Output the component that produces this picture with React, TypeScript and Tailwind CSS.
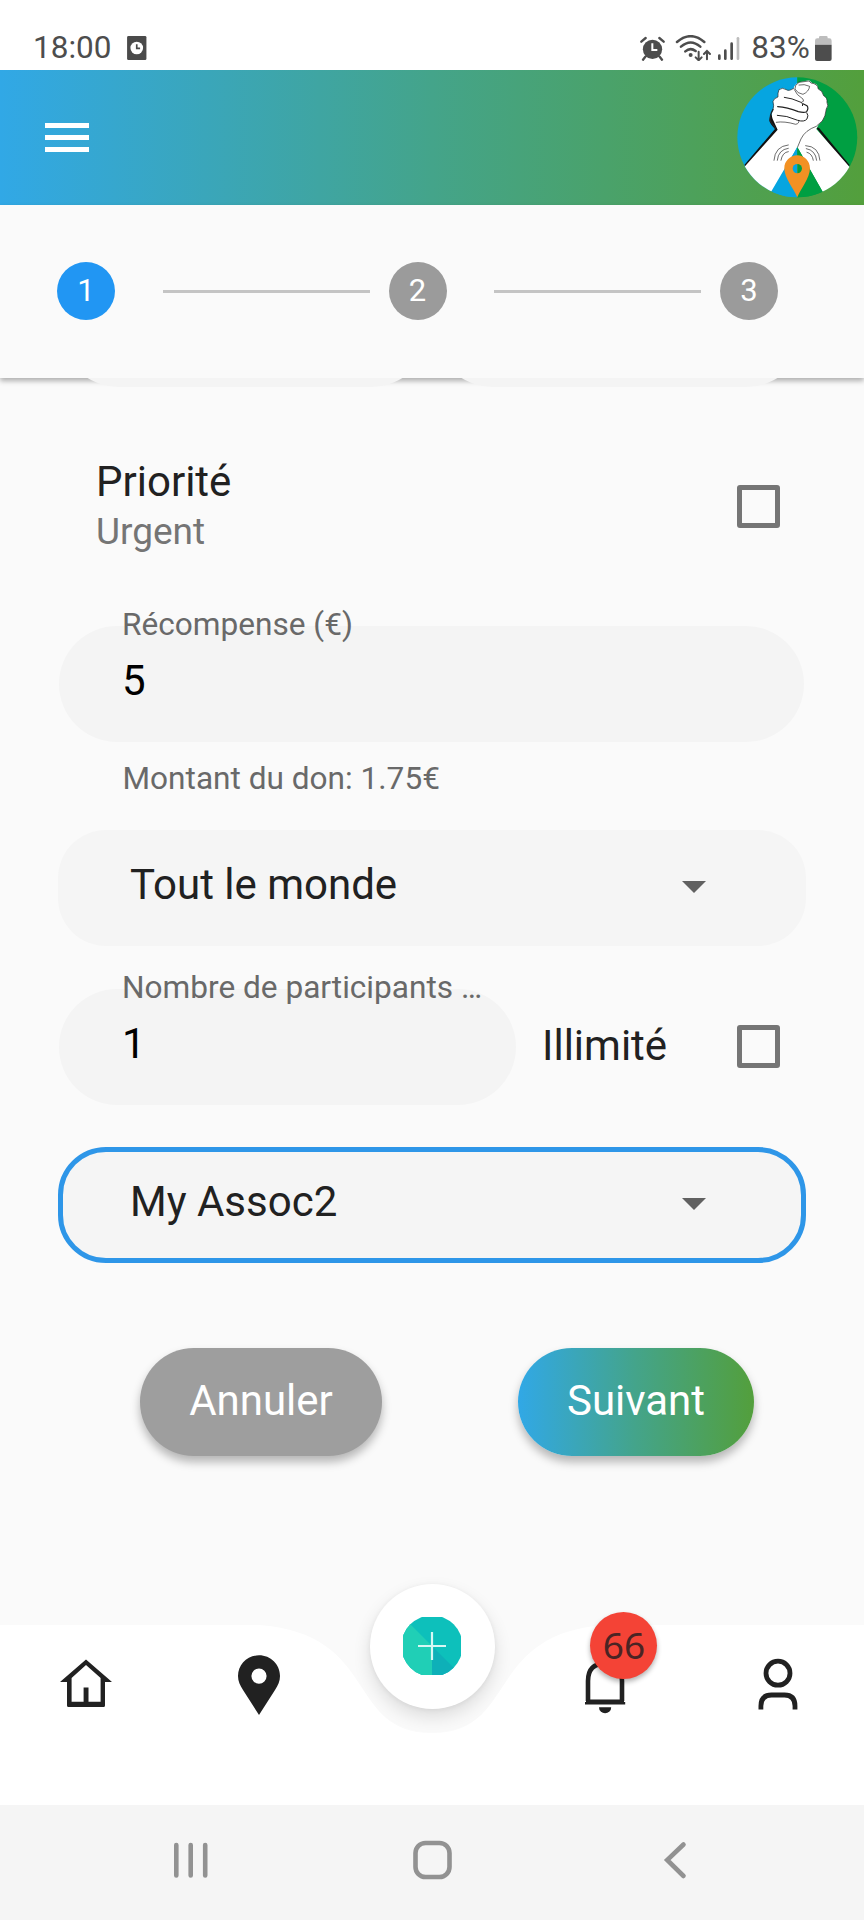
import React, { useState } from 'react';

const steps = [1, 2, 3];

const StatusBar = () => (
  <div className="flex h-[70px] items-center pt-[26px] pl-[33px] pr-[32px] bg-white text-[31.5px] leading-none text-[#4d4d4d]">
    <span>18:00</span>
    <svg viewBox="0 0 58 72" className="ml-[16px] h-[24px] w-[19.5px]">
      <rect width="58" height="72" rx="4" fill="#4a4a4a" />
      <circle cx="29" cy="36" r="19" fill="#fff" />
      <path d="M29 25v12h10" fill="none" stroke="#4a4a4a" strokeWidth="5" />
    </svg>
    <div className="ml-auto flex items-center">
      {/* alarm */}
      <svg viewBox="30 30 75 80" className="h-[26.7px] w-[25px]">
        <circle cx="67.5" cy="73" r="29" fill="#4d4d4d" />
        <path d="M34 50l13-11M101 50L88 39M46 95l-7 9M89 95l7 9" stroke="#4d4d4d" strokeWidth="7" strokeLinecap="round" />
        <path d="M67 55v20h15" fill="none" stroke="#fff" strokeWidth="6" />
      </svg>
      {/* wifi */}
      <svg viewBox="135 30 112 80" className="ml-[10px] h-[26.7px] w-[37.3px]" fill="none" stroke="#4d4d4d" strokeWidth="7.5" strokeLinecap="round">
        <path d="M141 51Q182 16 223 51M153 65Q182 40 211 65M166 79Q181 66 197 78" />
        <circle cx="182" cy="90" r="6" fill="#4d4d4d" stroke="none" />
        <path d="M206 80v25M197 97l9 9 9-9M231 103V79M222 87l9-9 9 9" strokeWidth="6" />
      </svg>
      {/* cell signal */}
      <svg viewBox="262 30 70 80" className="ml-[5px] h-[26.7px] w-[23.3px]" strokeWidth="8" strokeLinecap="round" stroke="#4d4d4d">
        <path d="M269 92v9M287 77v24M306 56v45" />
        <path d="M325 40v61" stroke="#bdbdbd" />
      </svg>
      <span className="ml-[11px]">83%</span>
      {/* battery */}
      <svg viewBox="552 30 55 80" className="ml-[4px] h-[26.7px] w-[18.3px]">
        <path d="M567 40v-3q0-4 4-4h18q4 0 4 4v3h5q7 0 7 7v12h-50V47q0-7 7-7z" fill="#bdbdbd" />
        <path d="M555 59h50v43q0 6-6 6h-38q-6 0-6-6z" fill="#4d4d4d" />
      </svg>
    </div>
  </div>
);

const Logo = () => (
  <svg viewBox="20 22 362 362" className="h-[120.6px] w-[120.6px]">
    <defs>
      <clipPath id="logo-disc">
        <circle cx="201" cy="203" r="180" />
      </clipPath>
    </defs>
    <g clipPath="url(#logo-disc)">
      <rect x="20" y="20" width="181" height="370" fill="#06a5e0" />
      <rect x="201" y="20" width="185" height="370" fill="#009f42" />
      {/* arm outlines */}
      <path d="M121 132L117 152Q118 162 134 178L42 286L50 296L150 180Z" fill="#111" />
      <path d="M258 174L266 174L358 286L352 294Z" fill="#111" />
      <path
        d="M201 232L285 380L400 340L356 290L258 178Q262 166 276 154Q286 140 288 118Q296 108 290 98Q292 84 280 78Q276 62 264 58Q264 42 246 40L236 32L206 38Q192 46 190 56Q176 66 168 60Q156 52 146 60Q142 70 143 82Q130 86 128 96Q132 108 128 120Q122 134 127 148L142 180L44 290L20 350L118 374Z"
        fill="#fff"
      />
      <path d="M201 232L115 390H201Z" fill="#06a5e0" />
      <path d="M201 232L290 390H201Z" fill="#009f42" />
      <g fill="none" stroke="#222" strokeWidth="2" strokeLinecap="round">
        <path d="M258 170Q224 182 212 208L202 232" />
        <path d="M190 56Q176 66 168 60Q156 52 146 60Q142 70 143 82Q130 86 128 96Q132 108 128 120" />
        <path d="M206 38Q192 46 194 58Q202 72 218 74Q236 66 238 50Q222 42 206 46M206 38L236 34L242 40Q262 42 264 58Q276 62 280 78Q292 84 290 98Q296 108 288 118Q286 140 276 154L260 168" />
        <path d="M192 60Q198 76 218 88Q224 96 214 98" />
        <path d="M162 83Q184 85 212 98Q220 102 217 108" strokeWidth="3" />
        <path d="M142 111Q170 113 204 126Q222 130 229 126Q236 116 230 108L218 102" strokeWidth="3.5" />
        <path d="M141 137Q168 137 202 152Q222 158 230 148Q236 138 230 130" strokeWidth="3" />
        <path d="M138 158Q162 154 196 164Q208 162 205 152" />
        <path d="M128 120Q118 136 120 154L136 176" strokeWidth="4" />
        <path d="M131 272Q134 230 174 226M141 272Q144 240 174 236M152 272Q156 248 174 246" />
        <path d="M226 228Q266 230 269 272M228 237Q256 242 259 272M230 248Q246 252 249 272" />
      </g>
      <path d="M201 257c-21 0-39 17-39 39 0 30 29 62 39 87 10-25 38-57 38-87 0-22-17-39-38-39z" fill="#f29123" />
      <path d="M201 283a14 14 0 0 0 0 28z" fill="#06a5e0" />
      <path d="M201 283a14 14 0 0 1 0 28z" fill="#009f42" />
    </g>
  </svg>
);

const AppBar = () => (
  <header className="flex h-[134.5px] items-center justify-between bg-linear-to-r/srgb from-[#31a8e6] via-[#44a48a] to-[#539f3c] pl-[45.3px] pr-[6.5px]">
    <button className="flex flex-col gap-[7px]" aria-label="Menu">
      <span className="h-[5px] w-[43.7px] bg-white" />
      <span className="h-[5px] w-[43.7px] bg-white" />
      <span className="h-[5px] w-[43.7px] bg-white" />
    </button>
    <Logo />
  </header>
);

const Stepper = ({ current }: { current: number }) => (
  <div className="flex h-[173px] items-center bg-[#fafafa] pl-[57px] pr-[86px] shadow-[0_3px_5px_0px_rgba(0,0,0,0.3)]">
    {steps.map(step => (
      <React.Fragment key={step}>
        {step > 1 && <div className="mr-[19px] ml-[47.5px] h-[3px] flex-1 bg-[#c4c4c4]" />}
        <div
          className={`flex h-[58px] w-[58px] items-center justify-center rounded-full pt-[1px] text-[31px] text-white ${
            step === current ? 'bg-[#2196f3]' : 'bg-[#9b9b9b]'
          }`}
        >
          {step}
        </div>
      </React.Fragment>
    ))}
  </div>
);

const Checkbox = ({ checked, onChange, label }: { checked: boolean; onChange: () => void; label: string }) => (
  <button
    role="checkbox"
    aria-checked={checked}
    aria-label={label}
    onClick={onChange}
    className={`h-[43px] w-[43px] rounded-[3px] border-[5px] border-[#757575] ${checked ? 'bg-[#757575]' : ''}`}
  />
);

const Field = ({ label, value, className }: { label: string; value: string; className: string }) => (
  <div className={`relative h-[116px] rounded-full bg-[#f4f4f4] pt-[30px] pl-[63px] ${className}`}>
    <label className="absolute -top-[19px] left-[63px] text-[31.6px] leading-[36px] whitespace-nowrap text-[#696969]">{label}</label>
    <div className="text-[42px] leading-[50px] text-black">{value}</div>
  </div>
);

const Select = ({ value, className }: { value: string; className: string }) => (
  <div className={`flex h-[116px] items-center justify-between rounded-[48px] border-[5px] bg-[#f5f5f5] pr-[95px] pl-[67px] ${className}`}>
    <span className="pb-[5px] text-[42px] leading-[50px] text-[#212121]">{value}</span>
    <svg viewBox="0 0 24 12" className="mb-[2px] h-[12px] w-[24px]">
      <path d="M0 0h24L12 12z" fill="#616161" />
    </svg>
  </div>
);

const BottomNav = ({ notifications }: { notifications: number }) => (
  <nav className="relative h-[180px]">
    {/* floating action button */}
    <button
      aria-label="Ajouter"
      className="absolute -top-[41px] left-[369.5px] flex h-[125px] w-[125px] items-center justify-center rounded-full bg-white shadow-[0_8px_18px_0_rgba(0,0,0,0.12),0_1px_5px_rgba(0,0,0,0.06)]"
    >
      <svg viewBox="-29 -29 58 58" className="h-[58px] w-[58px]">
        <clipPath id="fab-disc">
          <circle r="30.6" />
        </clipPath>
        <g clipPath="url(#fab-disc)">
          <rect x="-29" y="-29" width="58" height="58" fill="#0dc0bb" />
          <path d="M-29-29L0 0V29H-29z" fill="#20cfb6" />
          <path d="M0 0L29 29H0z" fill="#0eb0b8" />
        </g>
        <path d="M-14 0H14M0-14V14" stroke="#d8f7f4" strokeWidth="2.2" />
      </svg>
    </button>
    <svg viewBox="0 0 864 180" className="absolute inset-0 h-[180px] w-[864px]">
      <path d="M0 0H259.2C380.2 9 345.6 108 432 108S483.8 9 604.8 0H864V181H0z" fill="#fff" />
    </svg>
    <div className="relative grid h-[120px] grid-cols-5 items-center justify-items-center text-[#212121]">
      <svg viewBox="0 0 60 60" className="h-[60px] w-[60px]" fill="currentColor" fillRule="evenodd">
        <path d="M30 4.5L56 27H49V50.5a1.5 1.5 0 0 1-1.5 1.5H12.5a1.5 1.5 0 0 1-1.5-1.5V27H4zM30 10L15.6 23V46.8H27.6V32.5H32.5V46.8H44.6V23z" />
      </svg>
      <svg viewBox="0 0 60 60" className="h-[60px] w-[60px]" fill="currentColor" fillRule="evenodd">
        <path d="M30 .3C18.4.3 9 9.5 9 21C9 26.5 11 30 14 35L30 60L46 35C49 30 51 26.5 51 21C51 9.5 41.6.3 30 .3zM30 13.5a7.6 7.6 0 1 1 0 15.2a7.6 7.6 0 1 1 0-15.2z" />
      </svg>
      <span />
      <div className="relative">
        <svg viewBox="0 0 60 60" className="h-[60px] w-[60px]" fill="none" stroke="currentColor">
          <path d="M13 46V26Q13 8.5 30 8.5T47 26V46" strokeWidth="4.6" />
          <path d="M11 46.5H49" strokeWidth="4" />
          <path d="M10 48.3H50.2" strokeWidth="2.4" />
          <path d="M24 52.2H36.2A6.1 6 0 0 1 24 52.2z" fill="currentColor" stroke="none" />
        </svg>
        <span className="absolute -top-[43px] left-[15.7px] flex h-[67px] w-[67px] items-center justify-center rounded-full bg-[#f44336] pb-[2px] font-['Noto_Sans'] text-[37px] leading-none text-[#4a2424] shadow-[0_3px_5px_rgba(0,0,0,0.3)]">
          {notifications}
        </span>
      </div>
      <svg viewBox="0 0 60 60" className="h-[60px] w-[60px]" fill="none" stroke="currentColor" strokeWidth="4.8">
        <circle cx="30" cy="18.2" r="12" />
        <path d="M12.9 54.5V51Q12.9 40 23.5 40H36.5Q47 40 47 51V54.5" />
      </svg>
    </div>
  </nav>
);

const SystemNav = () => (
  <div className="flex h-[115.5px] items-center justify-between bg-[#f5f5f5] px-[171px] pb-[4px]">
    <svg viewBox="0 0 40 40" className="h-[40px] w-[40px]" stroke="#929292" strokeWidth="4.6" strokeLinecap="round">
      <path d="M5.3 5V35.5M19.7 5V35.5M34.2 5V35.5" />
    </svg>
    <svg viewBox="0 0 40 40" className="h-[40px] w-[40px]" fill="none" stroke="#929292" strokeWidth="4.6">
      <rect x="3.5" y="3" width="34" height="34" rx="10" />
    </svg>
    <svg viewBox="0 0 40 40" className="h-[40px] w-[40px]" fill="none" stroke="#929292" strokeWidth="4.6" strokeLinecap="round">
      <path d="M30.5 4.5L14.2 20L30.5 36" />
    </svg>
  </div>
);

export default function App() {
  const [urgent, setUrgent] = useState(false);
  const [unlimited, setUnlimited] = useState(false);

  return (
    <div className="flex h-[1920px] w-[864px] flex-col overflow-hidden bg-[#fafafa] font-['Roboto',sans-serif]">
      <StatusBar />
      <AppBar />
      <Stepper current={1} />

      <main className="flex flex-1 flex-col">
        {/* previous fields, scrolled under the stepper */}
        <div className="flex h-[9px] items-end gap-[6px] overflow-hidden pl-[61px]">
          <div className="h-[115px] w-[368px] shrink-0 rounded-full bg-[#f4f4f4]" />
          <div className="h-[115px] w-[369px] shrink-0 rounded-full bg-[#f4f4f4]" />
        </div>

        <div className="mt-[70px] flex items-center justify-between pr-[84px] pl-[96px]">
          <div>
            <div className="text-[42px] leading-[50px] text-[#212121]">Priorité</div>
            <div className="text-[37px] leading-[50px] text-[#757575]">Urgent</div>
          </div>
          <Checkbox label="Priorité" checked={urgent} onChange={() => setUrgent(!urgent)} />
        </div>

        <Field label="Récompense (€)" value="5" className="mt-[69px] ml-[59px] w-[745px]" />
        <p className="mt-[19px] ml-[122.5px] text-[31.6px] leading-[36px] text-[#696969]">Montant du don: 1.75€</p>

        <Select value="Tout le monde" className="mt-[33px] mr-[58px] ml-[58px] border-transparent" />

        <div className="mt-[43px] flex items-center pr-[84px] pl-[59px]">
          <Field label="Nombre de participants …" value="1" className="w-[457px]" />
          <span className="-mt-[2px] ml-[26px] text-[42px] leading-[50px] text-[#212121]">Illimité</span>
          <div className="ml-auto h-[43px]">
            <Checkbox label="Illimité" checked={unlimited} onChange={() => setUnlimited(!unlimited)} />
          </div>
        </div>

        <Select value="My Assoc2" className="mt-[42px] mr-[58px] ml-[58px] border-[#2e96e8]" />

        <div className="mt-[85px] flex gap-[136px] pl-[140px] text-[42px] leading-[50px] text-white">
          <button className="h-[108px] w-[242px] rounded-full bg-[#9e9e9e] pb-[1px] shadow-[0_6px_10px_rgba(0,0,0,0.28)]">Annuler</button>
          <button className="h-[108px] w-[236px] rounded-full bg-linear-to-r/srgb from-[#31a8e6] via-[#44a48a] to-[#539f3c] pb-[1px] shadow-[0_6px_10px_rgba(0,0,0,0.28)]">
            Suivant
          </button>
        </div>
      </main>

      <BottomNav notifications={66} />
      <SystemNav />
    </div>
  );
}
